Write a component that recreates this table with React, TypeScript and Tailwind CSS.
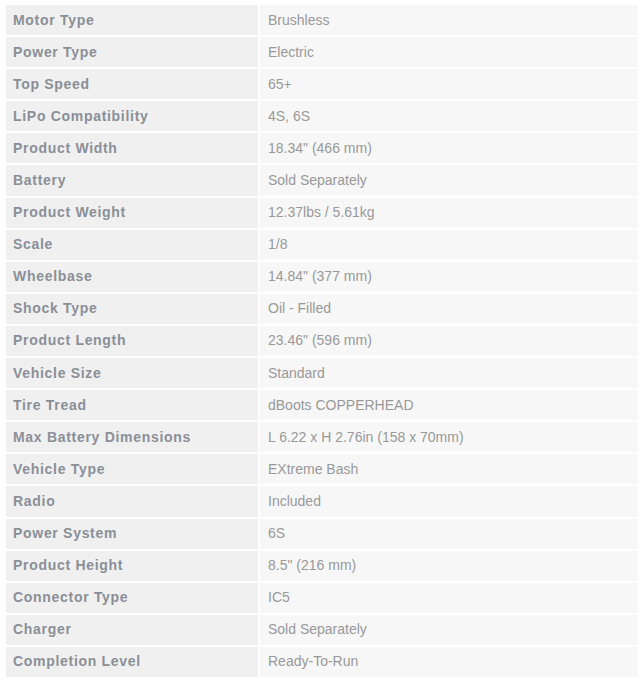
const specs: [string, string][] = [
  ['Motor Type', 'Brushless'],
  ['Power Type', 'Electric'],
  ['Top Speed', '65+'],
  ['LiPo Compatibility', '4S, 6S'],
  ['Product Width', '18.34" (466 mm)'],
  ['Battery', 'Sold Separately'],
  ['Product Weight', '12.37lbs / 5.61kg'],
  ['Scale', '1/8'],
  ['Wheelbase', '14.84" (377 mm)'],
  ['Shock Type', 'Oil - Filled'],
  ['Product Length', '23.46" (596 mm)'],
  ['Vehicle Size', 'Standard'],
  ['Tire Tread', 'dBoots COPPERHEAD'],
  ['Max Battery Dimensions', 'L 6.22 x H 2.76in (158 x 70mm)'],
  ['Vehicle Type', 'EXtreme Bash'],
  ['Radio', 'Included'],
  ['Power System', '6S'],
  ['Product Height', '8.5" (216 mm)'],
  ['Connector Type', 'IC5'],
  ['Charger', 'Sold Separately'],
  ['Completion Level', 'Ready-To-Run'],
];

export default function App() {
  return (
    <div className="bg-white min-h-[686px] pl-[6px] pt-[5px] font-[family-name:'Liberation_Sans',Arial,sans-serif] text-[14px]">
      <div className="w-[632px] grid grid-cols-[252px_1fr] gap-[2px]">
        {specs.map(([label, value]) => (
          <div key={label} className="contents">
            <div className="h-[30.1px] flex items-center pl-[7px] bg-[#f0f0f0] font-bold tracking-[0.7px] text-[#8a8f97]">
              {label}
            </div>
            <div className="h-[30.1px] flex items-center pl-[8px] bg-[#f7f7f7] text-[#999999]">
              {value}
            </div>
          </div>
        ))}
      </div>
    </div>
  );
}
